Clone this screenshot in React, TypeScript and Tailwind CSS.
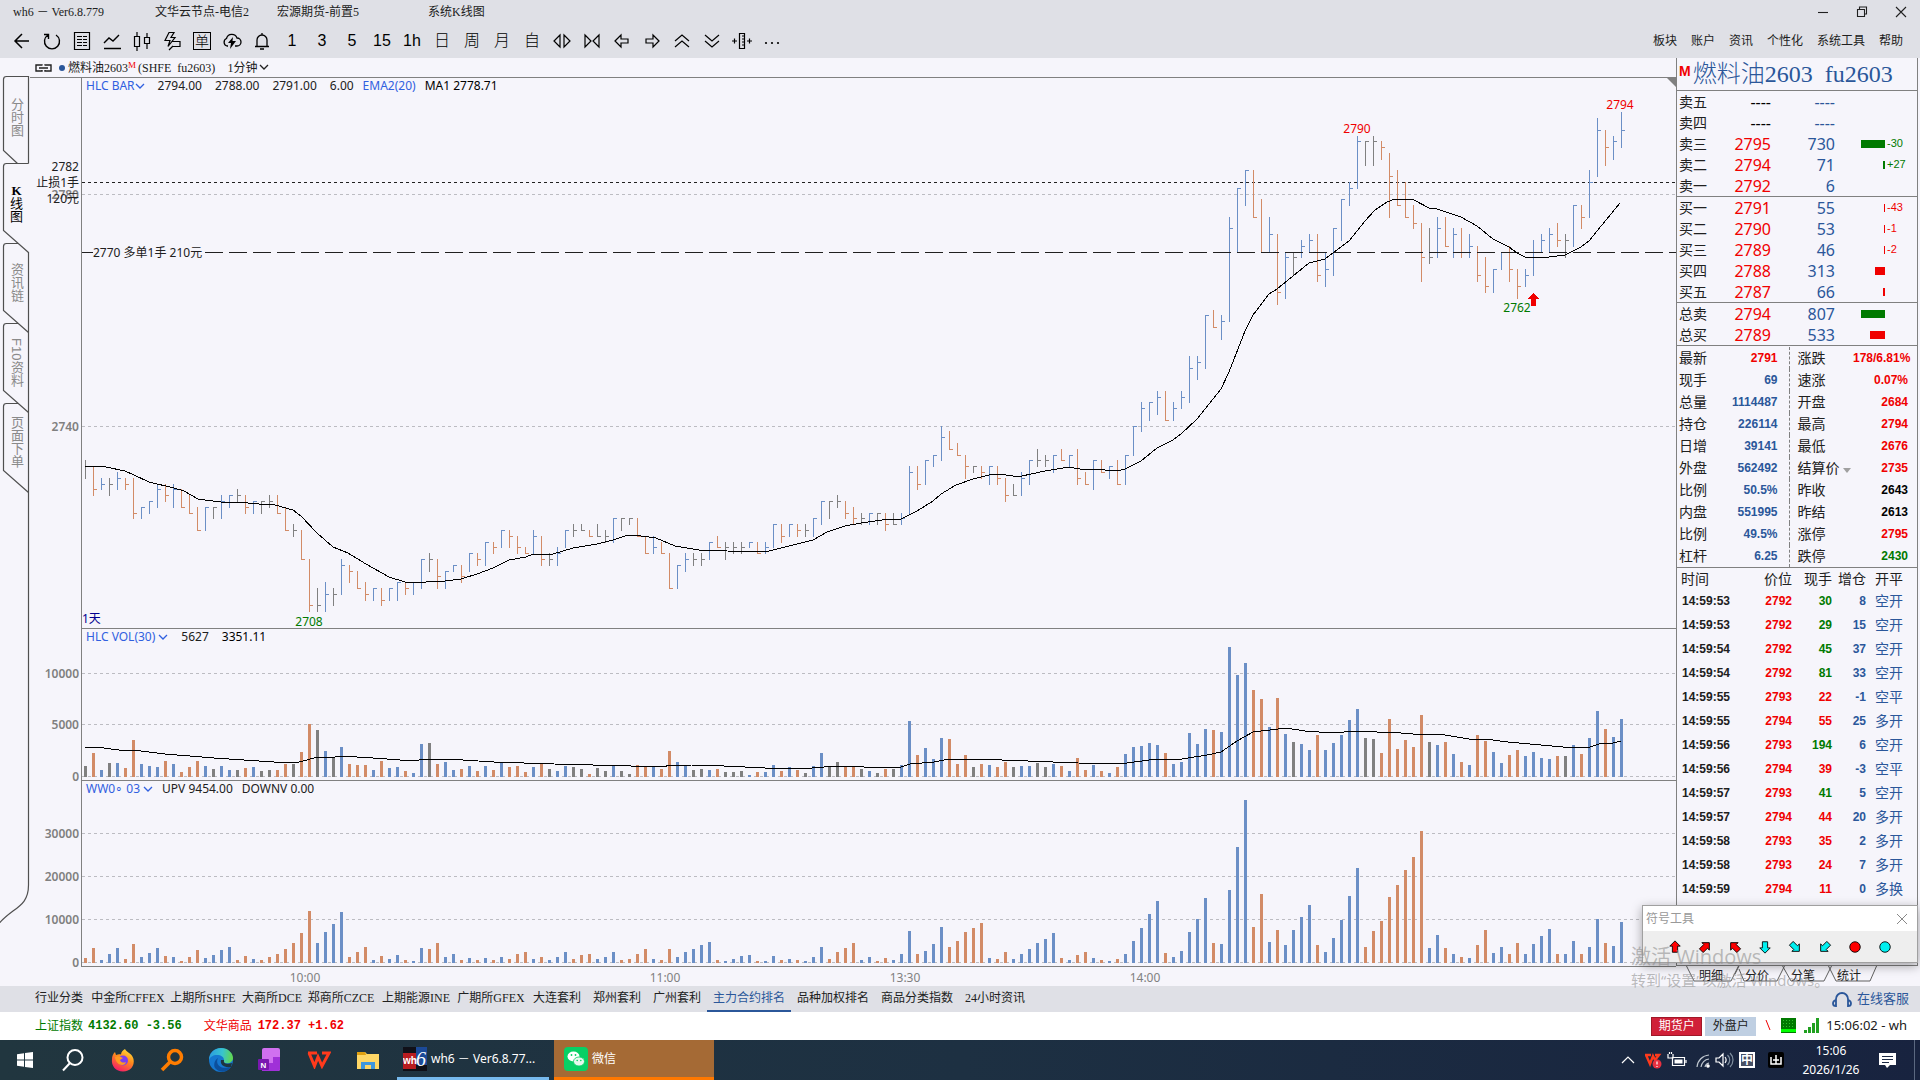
import React from "react";

type Kind = "u" | "d" | "g";
// high, low, close (offset from 2700), bar colour, volume in hundreds, flow direction
type Bar = [number, number, number, Kind, number, "u" | "d"];

const BARS: Bar[] = [
  [34,31,33,"g",11,"d"],[33,28,29,"d",23,"d"],[31,29,30,"u",7,"u"],[31,28,30,"g",14,"u"],[32,29,31,"u",14,"u"],
  [31,29,30,"d",9,"d"],[31,24,25,"d",36,"d"],[26,24,26,"u",13,"u"],[27,25,27,"u",11,"u"],[30,26,29,"u",10,"u"],
  [30,27,28,"d",16,"d"],[30,26,29,"u",13,"u"],[29,26,26,"d",5,"d"],[28,25,25,"d",10,"d"],[26,22,22,"d",16,"d"],
  [26,22,26,"u",11,"u"],[26,24,26,"g",8,"u"],[28,24,27,"u",11,"u"],[28,26,28,"u",7,"u"],[29,27,28,"g",7,"d"],
  [28,25,26,"d",9,"d"],[27,25,27,"u",10,"u"],[27,25,27,"g",6,"d"],[28,26,27,"g",7,"d"],[28,25,25,"d",7,"d"],
  [26,22,22,"d",13,"d"],[23,21,22,"g",13,"d"],[22,17,17,"d",24,"d"],[17,8,9,"d",51,"d"],[12,8,9,"g",46,"u"],
  [13,8,11,"u",25,"u"],[12,9,11,"g",19,"u"],[17,11,16,"u",29,"u"],[16,13,15,"d",13,"d"],[15,12,12,"d",12,"d"],
  [13,10,11,"d",12,"d"],[12,10,12,"u",7,"u"],[12,9,10,"d",16,"d"],[12,10,12,"u",9,"u"],[13,10,13,"u",10,"u"],
  [13,11,12,"d",6,"d"],[13,11,13,"u",4,"u"],[17,12,17,"u",32,"u"],[18,15,17,"g",33,"d"],[17,12,14,"d",13,"d"],
  [15,12,15,"u",15,"u"],[16,15,16,"u",7,"u"],[16,13,14,"d",8,"d"],[18,15,18,"u",11,"u"],[18,16,17,"d",6,"d"],
  [20,16,20,"u",11,"u"],[20,18,19,"d",7,"d"],[22,19,22,"u",14,"u"],[22,19,21,"d",10,"d"],[21,18,19,"d",11,"d"],
  [19,18,18,"d",5,"d"],[22,18,21,"u",10,"u"],[21,16,17,"d",14,"d"],[18,16,17,"g",8,"u"],[19,16,18,"u",6,"u"],
  [22,19,22,"u",11,"u"],[23,21,22,"g",10,"d"],[23,22,22,"g",8,"d"],[22,21,21,"d",3,"d"],[23,21,21,"g",9,"u"],
  [22,20,21,"g",6,"u"],[24,20,24,"u",11,"u"],[24,22,24,"g",6,"d"],[24,23,24,"g",3,"d"],[24,21,21,"d",12,"d"],
  [21,18,18,"d",11,"d"],[21,18,19,"u",10,"u"],[20,18,18,"d",8,"d"],[18,12,12,"d",25,"d"],[16,12,16,"u",15,"u"],
  [18,15,17,"u",11,"u"],[18,16,17,"g",7,"u"],[18,16,17,"g",8,"u"],[20,17,20,"u",7,"u"],[21,19,19,"d",8,"d"],
  [20,17,19,"g",5,"u"],[20,18,19,"g",5,"u"],[20,18,19,"g",6,"u"],[20,19,20,"u",2,"u"],[20,18,18,"d",5,"d"],
  [20,18,19,"u",5,"u"],[23,19,23,"u",12,"u"],[23,20,21,"d",6,"d"],[23,21,23,"u",10,"u"],[23,21,22,"d",7,"d"],
  [23,21,22,"g",4,"u"],[24,21,24,"u",11,"u"],[27,23,27,"u",23,"u"],[27,24,27,"g",10,"d"],[28,26,27,"g",15,"d"],
  [27,24,25,"d",10,"d"],[26,23,24,"d",11,"d"],[25,23,24,"g",8,"u"],[25,23,25,"u",6,"u"],[25,23,25,"g",4,"d"],
  [25,22,23,"d",8,"d"],[25,23,23,"g",8,"u"],[25,23,24,"u",12,"u"],[33,25,32,"u",54,"u"],[33,29,30,"d",21,"d"],
  [34,30,34,"u",28,"u"],[35,33,35,"u",17,"u"],[40,34,38,"u",38,"u"],[39,36,36,"d",37,"d"],[37,35,35,"d",13,"d"],
  [35,31,33,"d",21,"d"],[33,32,33,"g",10,"d"],[33,31,32,"d",13,"d"],[33,30,33,"u",12,"u"],[33,30,31,"d",10,"d"],
  [31,27,28,"d",15,"d"],[30,28,28,"g",10,"u"],[32,28,31,"u",11,"u"],[34,30,34,"u",11,"u"],[36,33,34,"g",14,"u"],
  [35,33,34,"g",10,"u"],[35,32,35,"u",13,"u"],[36,34,34,"d",11,"d"],[35,33,35,"u",6,"u"],[36,30,31,"d",18,"d"],
  [32,30,30,"d",7,"d"],[34,29,34,"u",12,"u"],[34,32,32,"d",6,"d"],[33,31,33,"u",4,"u"],[34,30,30,"d",10,"d"],
  [35,30,35,"u",22,"u"],[40,35,40,"u",29,"u"],[44,39,43,"u",30,"u"],[44,41,44,"u",33,"u"],[46,42,45,"u",31,"u"],
  [46,41,41,"d",23,"d"],[44,41,43,"u",13,"u"],[46,43,45,"u",15,"u"],[52,44,50,"u",43,"u"],[52,48,51,"u",32,"u"],
  [59,50,59,"u",47,"u"],[60,57,57,"d",46,"d"],[59,55,58,"u",44,"u"],[76,58,74,"u",126,"u"],[81,70,81,"u",99,"u"],
  [84,78,84,"u",111,"u"],[84,76,76,"d",84,"d"],[79,70,70,"d",76,"d"],[76,70,73,"u",49,"u"],[73,61,63,"d",77,"d"],
  [70,62,69,"u",42,"u"],[70,66,69,"g",34,"u"],[72,69,71,"u",32,"u"],[73,70,72,"u",26,"u"],[73,65,66,"d",41,"d"],
  [70,64,67,"u",26,"u"],[74,66,74,"u",33,"u"],[79,72,79,"u",41,"u"],[82,78,81,"u",55,"u"],[90,81,89,"u",66,"u"],
  [89,85,89,"g",38,"d"],[90,85,89,"g",37,"d"],[89,86,88,"d",23,"d"],[87,76,83,"d",56,"d"],[84,78,78,"d",27,"d"],
  [82,76,76,"d",36,"d"],[78,74,75,"d",29,"d"],[75,65,69,"d",60,"d"],[74,68,69,"g",34,"u"],[76,69,74,"u",31,"u"],
  [76,71,71,"d",34,"d"],[74,69,73,"u",22,"u"],[74,69,70,"d",15,"d"],[73,69,71,"u",12,"u"],[71,65,66,"d",41,"d"],
  [69,63,64,"d",35,"d"],[67,63,67,"u",24,"u"],[70,67,70,"u",14,"u"],[71,65,67,"d",21,"d"],[67,62,64,"d",26,"d"],
  [67,64,66,"u",20,"u"],[72,66,70,"u",24,"u"],[73,70,72,"u",18,"u"],[74,70,73,"u",17,"u"],[75,71,72,"d",20,"d"],
  [73,69,72,"g",20,"u"],[78,71,78,"u",31,"u"],[78,74,76,"d",22,"d"],[84,76,82,"u",38,"u"],[93,83,91,"u",64,"u"],
  [91,85,88,"d",47,"d"],[90,86,89,"u",39,"u"],[94,88,91,"u",56,"u"],
];

const MA_LINE =
  "85,466 106,467 125,471 134,475 149,482 174,488 184,491 198,499 205,500 221,502 237,502 259,504 275,505 293,510 301,516 317,533 333,547 348,553 366,564 389,577 405,582 413,583 426,582 445,581 461,579 477,574 493,568 509,560 526,557 533,554 553,554 573,548 597,544 613,540 628,535 641,536 656,538 675,546 699,550 727,551 765,552 773,550 797,544 813,540 827,532 845,526 861,523 882,520 901,519 917,511 933,501 941,494 956,485 973,479 989,475 999,474 1013,476 1022,476 1045,471 1069,467 1085,470 1093,469 1117,471 1125,469 1141,461 1157,448 1165,444 1173,440 1181,434 1197,419 1213,399 1221,389 1229,372 1245,331 1253,315 1269,294 1277,289 1293,276 1309,263 1325,259 1349,241 1365,221 1375,210 1387,202 1395,199 1414,200 1429,208 1437,209 1461,217 1477,226 1493,239 1509,247 1517,253 1525,257 1541,258 1565,255 1581,247 1589,241 1597,231 1620,203";
const VOL_LINE =
  "85,747 96,747 126,751 133,750 165,754 214,758 274,762 299,762 318,757 335,757 341,756 373,758 414,761 425,759 447,759 494,762 554,764 631,766 661,767 672,765 691,765 724,766 765,768 812,768 836,766 864,767 901,767 910,764 934,762 949,759 976,759 1028,761 1078,763 1119,764 1157,759 1182,759 1207,755 1221,752 1237,741 1253,732 1270,730 1286,728 1305,731 1333,733 1355,731 1373,731 1381,733 1389,732 1413,734 1445,735 1469,739 1485,739 1508,742 1563,747 1590,747 1599,744 1613,743 1621,741";

const COLOR = { u: "#6b8fc6", d: "#d28b67", g: "#808080" };
const GRID = "#bcbcc2";

const UI = "font-['Liberation_Serif','Noto_Sans_CJK_SC',sans-serif]";
const SANS = "font-['Noto_Sans','Noto_Sans_CJK_SC',sans-serif]";
const ARIAL = "font-['Liberation_Sans','Noto_Sans_CJK_SC',sans-serif]";

const barX = (i: number) => 3 + i * 8;
const priceY = (p: number) => Math.floor(332 - 5.8 * (p - 40));

const FLOW = BARS.reduce<number[]>((acc, b, i) => {
  acc.push(i > 0 && BARS[i - 1][5] === b[5] ? acc[i - 1] + b[4] : b[4]);
  return acc;
}, []);

function GridLine({ y, dash = "3 3", color = GRID }: { y: number; dash?: string; color?: string }) {
  return <line x1="0" x2="100%" y1={y + 0.5} y2={y + 0.5} stroke={color} strokeDasharray={dash} />;
}

function AxisLabel({ y, children }: { y: number; children: React.ReactNode }) {
  return (
    <text x="-3" y={y} textAnchor="end" fill="#808080" fontSize="12" fontWeight="600">
      {children}
    </text>
  );
}

function PriceChart() {
  return (
    <svg className={`block h-[534px] w-full overflow-visible ${SANS}`} fontSize="12" shapeRendering="crispEdges">
      <GridLine y={100} />
      <GridLine y={332} />
      <GridLine y={88} color="#202020" />
      <AxisLabel y={105}>2780</AxisLabel>
      <AxisLabel y={337}>2740</AxisLabel>
      <g textAnchor="end" fill="#202020">
        <text x="-3" y="77">2782</text>
        <text x="-3" y="93">止损1手</text>
        <text x="-3" y="109">120元</text>
      </g>
      {BARS.map(([h, l, c, k], i) => (
        <g key={i} fill={COLOR[k]}>
          <rect x={barX(i)} y={priceY(h)} width="1" height={priceY(l) - priceY(h) + 1} />
          <rect x={barX(i)} y={priceY(c)} width="4" height="1" />
        </g>
      ))}
      <line x1="0" x2="11" y1="158.500" y2="158.500" stroke="#202020" />
      <text x="11" y="163" fill="#202020">2770 多单1手 210元</text>
      <line x1="123" x2="100%" y1="158.500" y2="158.500" stroke="#202020" strokeDasharray="18 6" />
      <g transform="translate(-82 -94)">
        <polyline points={MA_LINE} fill="none" stroke="#000" />
      </g>
      <text x="1275" y="39" textAnchor="middle" fill="#f00000">2790</text>
      <text x="1538" y="15" textAnchor="middle" fill="#f00000">2794</text>
      <text x="1435" y="218" textAnchor="middle" fill="#007a00">2762</text>
      <text x="227" y="532" textAnchor="middle" fill="#007a00">2708</text>
      <text x="0" y="529" fill="#000090">1天</text>
      <path d="M1451 199l6 6h-3v7h-5v-7h-4z" fill="#f00000" />
    </svg>
  );
}

function VolumeChart() {
  return (
    <svg className={`block h-[135px] w-full overflow-visible ${SANS}`} shapeRendering="crispEdges">
      <GridLine y={28} />
      <GridLine y={79} />
      <GridLine y={131} />
      <AxisLabel y={33}>10000</AxisLabel>
      <AxisLabel y={84}>5000</AxisLabel>
      <AxisLabel y={136}>0</AxisLabel>
      {BARS.map(([, , , k, v], i) => {
        const h = Math.round(v * 1.03);
        return <rect key={i} x={barX(i) - 1} y={132 - h} width="3" height={h} fill={COLOR[k]} />;
      })}
      <g transform="translate(-82 -645)">
        <polyline points={VOL_LINE} fill="none" stroke="#000" />
      </g>
    </svg>
  );
}

function FlowChart() {
  return (
    <svg className={`block h-[169px] w-full overflow-visible ${SANS}`} shapeRendering="crispEdges">
      {[36, 79, 122, 165].map((y, i) => (
        <React.Fragment key={y}>
          <GridLine y={y} />
          <AxisLabel y={y + 5}>{i === 3 ? "0" : `${30 - i * 10}000`}</AxisLabel>
        </React.Fragment>
      ))}
      {BARS.map((b, i) => {
        const h = Math.round(FLOW[i] * 0.43);
        return <rect key={i} x={barX(i) - 1} y={166 - h} width="3" height={h} fill={COLOR[b[5]]} />;
      })}
    </svg>
  );
}

function Chevron({ className = "" }: { className?: string }) {
  return (
    <svg width="10" height="7" viewBox="0 0 10 7" className={className} fill="none" stroke="currentColor" strokeWidth="1.300">
      <path d="M1 1l4 4 4-4" />
    </svg>
  );
}

function Glyph({ children, w = 1.2 }: { children: React.ReactNode; w?: number }) {
  return (
    <svg width="20" height="20" viewBox="0 0 20 20" fill="none" stroke="currentColor" strokeWidth={w}>
      {children}
    </svg>
  );
}

const TOOLS: [string, React.ReactNode][] = [
  ["返回", <Glyph w={1.5}><path d="M17 10H3M10 3l-7 7 7 7" /></Glyph>],
  ["刷新", <Glyph w={1.4}><path d="M6 4a7.5 7.5 0 1 0 8 0M2 3.500h4.500v4.500" /></Glyph>],
  ["报价", <Glyph w={1.2}><path d="M2.500 1.500h15v17h-15zM5 5.500h5M11 5.500h4M5 8.500h5M11 8.500h4M5 11.500h5M11 11.500h4M5 14.500h5M11 14.500h4" /></Glyph>],
  ["分时", <Glyph w={1.4}><path d="M2 12l5-5 4 3 6-6M2 17.500h17" /></Glyph>],
  ["K线", <Glyph w={1.2}><path d="M2.500 5.500h5v10h-5zM5 1v4M5 15v5M12.500 6.500h5v6h-5zM15 2v4M15 12v6" /></Glyph>],
  ["闪电手", <Glyph w={1.2}><path d="M7 1.500h5l-3 5h4l-7 9 2-6H3zM10 10.500h8v5h-7M11 15l-4 4" /></Glyph>],
  ["下单", <span className="flex size-[18px] items-center justify-center border border-black text-[14px] leading-none">单</span>],
  ["云", <Glyph w={1.3}><path d="M6 15H5a4 4 0 0 1-.5-7.500A5.500 5.500 0 0 1 15 7a4 4 0 0 1 0 8h-2" /><path d="M11 6l-5 6h3l-1 6 6-8h-3.500z" fill="currentColor" stroke="none" /></Glyph>],
  ["提醒", <Glyph w={1.3}><path d="M3 15.500h14M5 15V9a5 5 0 0 1 10 0v6M10 2v2M8 18h4" /></Glyph>],
  ["1分钟", "1"], ["3分钟", "3"], ["5分钟", "5"], ["15分钟", "15"], ["1小时", "1h"],
  ["日线", "日"], ["周线", "周"], ["月线", "月"], ["自定义周期", "自"],
  ["放宽", <Glyph><path d="M8 4L2 10l6 6zM12 4l6 6-6 6z" /></Glyph>],
  ["收窄", <Glyph><path d="M3 4l6 6-6 6zM17 4l-6 6 6 6z" /></Glyph>],
  ["左移", <Glyph><path d="M3 10l6-6v4h7v4H9v4z" /></Glyph>],
  ["右移", <Glyph><path d="M17 10l-6-6v4H4v4h7v4z" /></Glyph>],
  ["向上", <Glyph><path d="M3 10l7-6 7 6M3 16l7-6 7 6" /></Glyph>],
  ["向下", <Glyph><path d="M3 4l7 6 7-6M3 10l7 6 7-6" /></Glyph>],
  ["间距", <Glyph><path d="M7.500 2.500h5v15h-5zM10 5h2M10 8h2M10 11h2M10 14h2M0 10h5M2.500 7.500v5M15 10h5M17.500 7.500v5" /></Glyph>],
  ["更多", <Glyph><g fill="currentColor" stroke="none"><circle cx="4" cy="12" r="1.100" /><circle cx="10" cy="12" r="1.100" /><circle cx="16" cy="12" r="1.100" /></g></Glyph>],
];

function Header() {
  return (
    <header className={`bg-[#dfe0e6] text-[#202020] ${UI}`}>
      <div className="flex h-[24px] items-center pl-[13px] text-[12px]">
        <span className="w-[142px] whitespace-pre">wh6 － Ver6.8.779</span>
        <span className="w-[122px]">文华云节点-电信2</span>
        <span className="w-[151px]">宏源期货-前置5</span>
        <span>系统K线图</span>
        <div className="ml-auto flex">
          {[
            ["最小化", "M5 10.500h10"],
            ["还原", "M5.500 7.500h7v7h-7zM7.500 7v-2h7v7h-2"],
            ["关闭", "M5 5l10 10M15 5L5 15"],
          ].map(([label, d]) => (
            <button key={label} aria-label={label} className="flex w-[39px] justify-center">
              <Glyph w={1.1}><path d={d} /></Glyph>
            </button>
          ))}
        </div>
      </div>
      <div className="flex h-[34px] items-center pl-[7px]">
        {TOOLS.map(([label, icon]) => (
          <button key={label} aria-label={label} className={`flex h-[34px] w-[30px] items-center justify-center text-[16px] leading-none font-light text-black ${ARIAL}`}>
            {icon}
          </button>
        ))}
        <nav className="ml-auto flex gap-[14px] pr-[17px] text-[12px]">
          {["板块", "账户", "资讯", "个性化", "系统工具", "帮助"].map((t) => (
            <button key={t}>{t}</button>
          ))}
        </nav>
      </div>
    </header>
  );
}

function SideTabs() {
  const tab = "flex w-full items-center justify-center [writing-mode:vertical-rl] text-[13px] leading-none text-[#8a8a8a]";
  return (
    <aside className={`relative w-[30px] shrink-0 pt-px ${ARIAL}`}>
      <svg className="absolute inset-0 h-full w-full overflow-visible" fill="none" stroke="#505050" strokeWidth="1.200">
        <path d="M28.500 86.500v-87h-22q-3 0-3 3v71l14 13" />
        <path d="M28.500 86.500h-22q-3 0-3 3v64l25 22" />
        {[166, 246, 326].map((y) => (
          <path key={y} d={`M18 ${y + 0.5}H6.500q-3 0-3 3v64l25 22`} />
        ))}
        <path d="M28.500 175v633c0 22-15 22-29 38" />
      </svg>
      <nav className="relative flex flex-col pl-[3px]">
        <button className={`${tab} h-[78px]`}>分时图</button>
        <button className="mt-[8px] flex h-[78px] w-full flex-col items-center justify-center text-[13px] leading-[13px] text-black">
          <b className="font-['Liberation_Serif',serif]">K</b>
          <span>线</span>
          <span>图</span>
        </button>
        <button className={`${tab} h-[80px]`}>资讯链</button>
        <button className={`${tab} h-[80px]`}>F10资料</button>
        <button className={`${tab} h-[80px]`}>页面下单</button>
      </nav>
    </aside>
  );
}

function Pane({ header, children }: { header: React.ReactNode; children: React.ReactNode }) {
  return (
    <section className="ml-[51px] border-b border-l border-[#808080]">
      <div className={`flex h-[16px] items-center pl-[4px] text-[12px] whitespace-pre text-[#202020] ${SANS}`}>{header}</div>
      {children}
    </section>
  );
}

function Charts() {
  return (
    <div className="relative min-w-0 flex-1 border-t border-[#808080]">
      <svg className="absolute top-0 right-0 z-10" width="9" height="9"><path d="M0 0h9v9z" fill="#808080" /></svg>
      <Pane
        header={
          <>
            <button className="flex items-center text-[#3060e0]">HLC BAR<Chevron /></button>
            <span className="ml-[13px]">2794.00</span>
            <span className="ml-[13px]">2788.00</span>
            <span className="ml-[13px]">2791.00</span>
            <span className="ml-[13px]">6.00</span>
            <span className="ml-[9px] text-[#3060e0]">EMA2(20)</span>
            <span className="ml-[9px] text-black">MA1 2778.71</span>
          </>
        }
      >
        <PriceChart />
      </Pane>
      <Pane
        header={
          <>
            <button className="flex items-center text-[#3060e0]">HLC VOL(30)<Chevron className="ml-[3px]" /></button>
            <span className="ml-[13px]">5627</span>
            <span className="ml-[13px] text-black">3351.11</span>
          </>
        }
      >
        <VolumeChart />
      </Pane>
      <Pane
        header={
          <>
            <button className="flex items-center text-[#3060e0]">WW0∘ 03<Chevron className="ml-[3px]" /></button>
            <span className="ml-[9px]">UPV 9454.00</span>
            <span className="ml-[9px]">DOWNV 0.00</span>
          </>
        }
      >
        <FlowChart />
      </Pane>
      <svg className={`ml-[52px] block h-[19px] ${SANS}`} fill="#808080" fontSize="12" textAnchor="middle" width="1200">
        <text x="223" y="15">10:00</text>
        <text x="583" y="15">11:00</text>
        <text x="823" y="15">13:30</text>
        <text x="1063" y="15">14:00</text>
      </svg>
    </div>
  );
}

const RED = "text-[#f00000]";
const BLUE = "text-[#2b579a]";
const GREEN = "text-[#007a00]";

type Quote = [string, string, string, number?, string?];
const ASKS: Quote[] = [
  ["卖五", "----", "----"], ["卖四", "----", "----"], ["卖三", "2795", "730", 24, "-30"], ["卖二", "2794", "71", 2, "+27"], ["卖一", "2792", "6"],
];
const BIDS: Quote[] = [
  ["买一", "2791", "55", 1, "-43"], ["买二", "2790", "53", 1, "-1"], ["买三", "2789", "46", 1, "-2"], ["买四", "2788", "313", 10], ["买五", "2787", "66", 2],
];
const TOTALS: Quote[] = [["总卖", "2794", "807", 24], ["总买", "2789", "533", 15]];

function QuoteTable({ rows, green }: { rows: Quote[]; green: (i: number) => boolean }) {
  return (
    <div className="shrink-0 border-b border-[#808080]">
      <table className={`w-full table-fixed ${SANS}`}>
        <colgroup><col className="w-[43px]" /><col className="w-[51px]" /><col className="w-[64px]" /><col className="w-[50px]" /><col /></colgroup>
        <tbody>
          {rows.map(([label, price, qty, bar, delta], i) => (
            <tr key={label} className="h-[21px] leading-none">
              <th className="pl-[2px] text-left text-[14px] font-normal text-[#202020]">{label}</th>
              <td className={`text-right text-[16px] ${price === "----" ? "text-black" : RED}`}>{price}</td>
              <td className={`text-right text-[16px] ${BLUE}`}>{qty}</td>
              <td><div className={`ml-auto h-[8px] ${green(i) ? "bg-[#007a00]" : "bg-[#f00000]"}`} style={{ width: bar ?? 0 }} /></td>
              <td className={`pl-[2px] text-[11px] ${ARIAL} ${green(i) ? GREEN : RED}`}>{delta}</td>
            </tr>
          ))}
        </tbody>
      </table>
    </div>
  );
}

const DETAILS: [string, string, string, string, string, string][] = [
  ["最新", "2791", RED, "涨跌", "178/6.81%", RED],
  ["现手", "69", BLUE, "速涨", "0.07%", RED],
  ["总量", "1114487", BLUE, "开盘", "2684", RED],
  ["持仓", "226114", BLUE, "最高", "2794", RED],
  ["日增", "39141", BLUE, "最低", "2676", RED],
  ["外盘", "562492", BLUE, "结算价", "2735", RED],
  ["比例", "50.5%", BLUE, "昨收", "2643", "text-black"],
  ["内盘", "551995", BLUE, "昨结", "2613", "text-black"],
  ["比例", "49.5%", BLUE, "涨停", "2795", RED],
  ["杠杆", "6.25", BLUE, "跌停", "2430", GREEN],
];

const TRADES: [string, string, string, boolean, string, string][] = [
  ["14:59:53", "2792", "30", true, "8", "空开"],
  ["14:59:53", "2792", "29", true, "15", "空开"],
  ["14:59:54", "2792", "45", true, "37", "空开"],
  ["14:59:54", "2792", "81", true, "33", "空开"],
  ["14:59:55", "2793", "22", false, "-1", "空平"],
  ["14:59:55", "2794", "55", false, "25", "多开"],
  ["14:59:56", "2793", "194", true, "6", "空开"],
  ["14:59:56", "2794", "39", false, "-3", "空平"],
  ["14:59:57", "2793", "41", true, "5", "空开"],
  ["14:59:57", "2794", "44", false, "20", "多开"],
  ["14:59:58", "2793", "35", false, "2", "多开"],
  ["14:59:58", "2793", "24", false, "7", "多开"],
  ["14:59:59", "2794", "11", false, "0", "多换"],
];

const UP = "M8 1l6 6h-3v7H5V7H2z";
const SYMBOLS: [string, string, number][] = [
  ["上箭头", "#ff0000", 0], ["右上箭头", "#ff0000", 45], ["左上箭头", "#ff0000", -45],
  ["下箭头", "#00f0f0", 180], ["右下箭头", "#00f0f0", 135], ["左下箭头", "#00f0f0", 225],
];

function SymbolTool() {
  return (
    <div className="absolute right-[2px] bottom-[23px] z-20 w-[276px] border border-[#a0a0a0] bg-[#eeeeee] shadow-[0_3px_10px_rgba(0,0,0,0.35)]">
      <div className={`flex h-[25px] items-center justify-between bg-white pr-[9px] pl-[3px] text-[12px] text-[#999] ${UI}`}>
        <span>符号工具</span>
        <button aria-label="关闭"><svg width="12" height="12" stroke="#888" fill="none"><path d="M1 1l10 10M11 1L1 11" /></svg></button>
      </div>
      <div className="flex h-[31px] items-center gap-[14px] pl-[24px]">
        {SYMBOLS.map(([label, fill, turn]) => (
          <button key={label} aria-label={label}>
            <svg width="16" height="14" viewBox="0 0 16 16" stroke="#000"><path d={UP} fill={fill} transform={`rotate(${turn} 8 8)`} /></svg>
          </button>
        ))}
        <button aria-label="红点"><svg width="16" height="14" viewBox="0 0 16 16" stroke="#000"><circle cx="8" cy="8" r="6" fill="#ff0000" /></svg></button>
        <button aria-label="青点"><svg width="16" height="14" viewBox="0 0 16 16" stroke="#000"><circle cx="8" cy="8" r="6" fill="#00f0f0" /></svg></button>
      </div>
    </div>
  );
}

function RightPanel() {
  return (
    <div className="relative flex w-[244px] shrink-0 flex-col pr-[2px]">
      <div className="flex flex-1 flex-col border-r border-b border-l border-[#808080]">
        <div className="flex h-[33px] shrink-0 items-center border-b border-[#808080] pl-[2px]">
          <span className="mb-[6px] font-['Liberation_Sans',sans-serif] text-[14px] font-bold text-[#f00000]">M</span>
          <h1 className={`ml-[2px] text-[24px] leading-none whitespace-pre ${BLUE} font-['Liberation_Serif','Noto_Sans_CJK_SC',serif] font-light`}>燃料油2603  fu2603</h1>
        </div>
        <QuoteTable rows={ASKS} green={() => true} />
        <QuoteTable rows={BIDS} green={() => false} />
        <QuoteTable rows={TOTALS} green={(i) => i === 0} />
        <div className="shrink-0 border-b border-[#808080] pt-px">
          <table className={`w-full table-fixed ${ARIAL}`}>
            <colgroup><col className="w-[40px]" /><col className="w-[72px]" /><col className="w-[64px]" /><col /></colgroup>
            <tbody>
              {DETAILS.map(([a, av, ac, b, bv, bc], i) => (
                <tr key={i} className="h-[22px] leading-none">
                  <th className="pl-[2px] text-left text-[14px] font-normal text-[#202020]">{a}</th>
                  <td className={`border-r border-dashed border-[#808080] pr-[11px] text-right text-[12px] font-bold ${ac}`}>{av}</td>
                  <th className="pl-[8px] text-left text-[14px] font-normal whitespace-nowrap text-[#202020]">
                    {b}
                    {b === "结算价" && <span className="ml-[3px] inline-block border-x-[4px] border-t-[5px] border-x-transparent border-t-[#a0a0a0]" />}
                  </th>
                  <td className={`pr-[9px] text-right text-[12px] font-bold ${bc}`}>{bv}</td>
                </tr>
              ))}
            </tbody>
          </table>
        </div>
        <table className={`w-full table-fixed ${ARIAL}`}>
          <colgroup><col className="w-[64px]" /><col className="w-[51px]" /><col className="w-[40px]" /><col className="w-[34px]" /><col /></colgroup>
          <thead>
            <tr className="h-[21px] text-right text-[14px] leading-none text-[#202020]">
              <th className="pl-[4px] text-left font-normal">时间</th>
              <th className="font-normal">价位</th>
              <th className="font-normal">现手</th>
              <th className="font-normal">增仓</th>
              <th className="pl-[9px] text-left font-normal">开平</th>
            </tr>
          </thead>
          <tbody>
            {TRADES.map(([time, price, lots, down, chg, side], i) => (
              <tr key={i} className="h-[24px] text-right text-[12px] leading-none font-bold">
                <td className="pl-[5px] text-left text-[#202020]">{time}</td>
                <td className={RED}>{price}</td>
                <td className={down ? GREEN : RED}>{lots}</td>
                <td className={BLUE}>{chg}</td>
                <td className={`pl-[9px] text-left text-[14px] font-normal ${BLUE}`}>{side}</td>
              </tr>
            ))}
          </tbody>
        </table>
      </div>
      <div className="relative flex h-[20px] shrink-0 pl-[12px]">
        <svg className="absolute top-0 left-[10px]" width="200" height="17" fill="none" stroke="#606060">
          <path d="M0 -1l8 16h37l8-16M53 0l-4 8M53 3l5 12h33l8-16M96 -1l9 16h33l8-16M142 -1l8 16h34l7-16" />
        </svg>
        {["明细", "分价", "分笔", "统计"].map((t) => (
          <button key={t} className={`relative w-[46px] text-[12px] leading-[16px] text-[#202020] ${UI}`}>{t}</button>
        ))}
      </div>
      <SymbolTool />
      <div className="pointer-events-none absolute right-[3px] bottom-[-4px] z-30 w-[286px] font-['Open_Sans','Noto_Sans_CJK_SC',sans-serif] whitespace-nowrap text-[#909090]/60">
        <p className="text-[20px] leading-[26px]">激活 Windows</p>
        <p className="text-[15px] leading-[20px]">转到“设置”以激活 Windows。</p>
      </div>
    </div>
  );
}

const SHEETS: [string, string][] = [
  ["行业分类", "w-[60px]"], ["中金所CFFEX", "w-[78px]"], ["上期所SHFE", "w-[72px]"], ["大商所DCE", "w-[66px]"],
  ["郑商所CZCE", "w-[72px]"], ["上期能源INE", "w-[78px]"], ["广期所GFEX", "w-[72px]"], ["大连套利", "w-[60px]"],
  ["郑州套利", "w-[60px]"], ["广州套利", "w-[60px]"], ["主力合约排名", "w-[84px]"], ["品种加权排名", "w-[84px]"],
  ["商品分类指数", "w-[84px]"], ["24小时资讯", "w-[72px]"],
];

function BottomBars() {
  return (
    <>
      <nav className={`flex h-[26px] items-center bg-[#dfe0e6] pl-[29px] text-[12px] text-[#202020] ${UI}`}>
        {SHEETS.map(([t, w]) => (
          <a
            key={t}
            href="#"
            className={`flex h-[26px] shrink-0 items-center justify-center border-b-2 whitespace-nowrap ${w} ${t === "主力合约排名" ? "border-[#2b579a] text-[#2b579a]" : "border-transparent"}`}
          >
            {t}
          </a>
        ))}
        <a href="#" className={`mr-[11px] ml-auto flex items-center gap-[5px] text-[13px] ${BLUE}`}>
          <svg width="20" height="17" viewBox="0 0 20 17" fill="none" stroke="currentColor" strokeWidth="1.800">
            <path d="M4 11V8a6 6 0 0 1 12 0v3M4 9c-4 1-4 6 0 6zM16 9c4 1 4 6 0 6z" />
          </svg>
          在线客服
        </a>
      </nav>
      <div className={`flex h-[28px] items-center bg-white pl-[35px] text-[12px] ${UI}`}>
        <span className={GREEN}>上证指数</span>
        <b className={`ml-[5px] font-['Liberation_Mono',monospace] ${GREEN}`}>4132.60 -3.56</b>
        <span className={`ml-[22px] ${RED}`}>文华商品</span>
        <b className={`ml-[6px] font-['Liberation_Mono',monospace] ${RED}`}>172.37 +1.62</b>
        <div className="mr-[13px] ml-auto flex items-center">
          <button className="h-[19px] w-[51px] border border-[#a01828] bg-[#d02038] leading-none text-white">期货户</button>
          <button className="ml-[3px] h-[19px] w-[51px] bg-[#bfcfe2] leading-none text-[#202020]">外盘户</button>
          <svg className="ml-[9px]" width="54" height="18" viewBox="0 0 54 18">
            <path d="M1 3l4 10" stroke="#f00000" />
            <path d="M16 1h15v15H16z" fill="#007a00" />
            <path d="M18 3.500h12M18 6.500h12M18 9.500h12" stroke="#30c030" strokeDasharray="1 2" />
            <path d="M16 12h15v3H16z" fill="#00ff00" />
            <path d="M39 13h3v3h-3zM43 10h3v6h-3zM47 6h3v10h-3zM51 1h3v15h-3z" fill="#20a020" />
          </svg>
          <span className={`ml-[7px] text-[13px] text-[#202020] ${SANS}`}>15:06:02 - wh</span>
        </div>
      </div>
    </>
  );
}

const APPS: [string, React.ReactNode][] = [
  ["开始", <svg width="16" height="16" viewBox="0 0 16 16" fill="#fff"><path d="M0 2.200l7-1v6.300H0zM8 1l8-1v7.500H8zM0 8.500h7v6.300l-7-1zM8 8.500h8V16l-8-1.100z" /></svg>],
  ["搜索", <svg width="24" height="24" viewBox="0 0 24 24" fill="none" stroke="#fff" strokeWidth="2"><circle cx="13" cy="9.500" r="7.500" /><path d="M8 15l-7 7.500" /></svg>],
  ["Firefox", (
    <svg width="24" height="24" viewBox="0 0 24 24">
      <defs><linearGradient id="ff" x1="0.8" y1="0" x2="0.3" y2="1"><stop offset="0" stopColor="#ffe23a" /><stop offset="0.45" stopColor="#ff8a1c" /><stop offset="1" stopColor="#f5186a" /></linearGradient></defs>
      <path d="M14 1c1 3 7 4 8.500 10C24 18 19 23.500 12 23.500S0 18 1 11c0-3 1-5 3-7l1 3c2-1 4-1 5-.5C10 4 12 2 14 1z" fill="url(#ff)" />
      <circle cx="12" cy="12.500" r="5" fill="#7a3ff0" /><path d="M4 9c4-2 6 0 8 1l-3 2c1 3 4 3 6 2-1 5-10 4-11-5z" fill="#ff9a20" />
    </svg>
  )],
  ["Everything", <svg width="24" height="24" viewBox="0 0 24 24" fill="none" stroke="#ff7d00" strokeWidth="3.500"><circle cx="15" cy="9" r="6.500" /><path d="M10 14l-8 8" /></svg>],
  ["Edge", (
    <svg width="24" height="24" viewBox="0 0 24 24">
      <defs><linearGradient id="ed" x1="0" y1="0.3" x2="1" y2="0.4"><stop offset="0" stopColor="#2a9be0" /><stop offset="0.55" stopColor="#38c4d0" /><stop offset="1" stopColor="#62d84c" /></linearGradient></defs>
      <circle cx="12" cy="12" r="12" fill="#1577cf" />
      <path d="M0 12C0 5 5 0 12 0s12 5 12 10c0 4-4 6-8 5-2-.5-1-2-1-3 0-3-3-5-7-5-4 0-7 2-8 5z" fill="url(#ed)" />
      <path d="M9 10c-3 6 2 12 13 9-4 6-12 6-16 1-2-4 0-8 3-10z" fill="#0c4f9c" />
      <path d="M15 12c-1 3 2 5 8 3l-1 4c-8 1-11-3-10-7z" fill="#1e3540" />
    </svg>
  )],
  ["OneNote", (
    <svg width="24" height="24" viewBox="0 0 24 24">
      <rect x="4" y="0" width="18" height="23" rx="2" fill="#d070f0" /><path d="M15 9h7v12a2 2 0 0 1-2 2H4v-8h11z" fill="#a030d8" />
      <rect x="0" y="11" width="11" height="11" rx="1" fill="#7a18b0" /><text x="5.500" y="19.500" textAnchor="middle" fontSize="8" fontWeight="700" fontFamily="Liberation Sans" fill="#fff">N</text>
    </svg>
  )],
  ["WPS", <svg width="24" height="18" viewBox="0 0 24 18" fill="none" stroke="#ff3a1c" strokeWidth="3"><path d="M1 2h9M2 2l5.500 13L11 6l4 9 7-13h-7" /></svg>],
  ["文件资源管理器", (
    <svg width="22" height="19" viewBox="0 0 22 19">
      <path d="M0 1h8l2 2h12v15H0z" fill="#ffd766" /><path d="M0 1h8l1 3H0z" fill="#e0a010" /><path d="M4 18v-7h14v7h-4v-4H8v4z" fill="#3f97de" />
    </svg>
  )],
];

function Taskbar() {
  return (
    <footer className={`flex h-[40px] items-center bg-linear-to-r from-[#21363f] via-[#1d3042] to-[#18233f] text-[13px] text-white ${SANS}`}>
      {APPS.map(([label, icon]) => (
        <button key={label} aria-label={label} className="flex h-[40px] w-[49px] shrink-0 items-center justify-center">{icon}</button>
      ))}
      <button className="ml-[5px] flex h-[40px] w-[152px] items-center gap-[4px] border-b-[3px] border-[#76b9ed] pl-[6px] text-[12px] whitespace-nowrap">
        <svg width="24" height="24" viewBox="0 0 24 24" className="shrink-0">
          <path d="M0 0h24v24H0z" fill="#101018" /><path d="M0 6h13v16H0z" fill="#b81c20" /><path d="M13 0h11v18H13z" fill="#1c4a98" />
          <text x="0" y="17" fontSize="10" fontWeight="700" fontFamily="Liberation Sans" fill="#fff">wh</text>
          <text x="13" y="19" fontSize="20" fontStyle="italic" fontFamily="Liberation Serif" fill="#fff">6</text>
        </svg>
        wh6 － Ver6.8.77...
      </button>
      <button className="ml-[5px] flex h-[40px] w-[160px] items-center gap-[4px] border-b-[3px] border-[#ff7800] bg-[#a56a35] pl-[10px] text-[12px]">
        <svg width="24" height="24" viewBox="0 0 24 24">
          <rect width="24" height="24" rx="4" fill="#08d065" />
          <ellipse cx="9.500" cy="9.500" rx="6" ry="5" fill="#fff" /><ellipse cx="15" cy="14.500" rx="5.500" ry="4.500" fill="#e8f8ee" stroke="#08d065" strokeWidth="0.800" />
          <g fill="#08d065"><circle cx="7.500" cy="8" r="0.900" /><circle cx="11.500" cy="8" r="0.900" /><circle cx="13.200" cy="13.500" r="0.800" /><circle cx="16.800" cy="13.500" r="0.800" /></g>
        </svg>
        微信
      </button>
      <div className="ml-auto flex h-full items-center">
        <svg width="119" height="20" viewBox="0 0 119 20" fill="none" stroke="#fff" strokeWidth="1.200">
          <path d="M2 13l6-6 6 6" />
          <path d="M25 5h6M26 5l4 9 3-8 2 4 4-5h-4" stroke="#ff3a1c" strokeWidth="2.400" /><circle cx="37" cy="14" r="4.500" fill="#e83040" stroke="none" /><path d="M37 11.500v3M37 16v1" />
          <path d="M52.500 7.500h12v8h-12zM66 10v3M48 4v4h5V4M49.500 2v2M51.500 2v2" /><path d="M54.500 9.500h8v4h-8z" fill="#fff" stroke="none" />
          <path d="M77 17a13 13 0 0 1 12-12M81 17a9 9 0 0 1 8-8M85 17a5 5 0 0 1 4-4" stroke="#c0c8d0" /><circle cx="88" cy="16" r="1.200" fill="#fff" />
          <path d="M96 8h3l4-4v12l-4-4h-3zM105 7c1.500 2 1.500 4 0 6" /><path d="M107.500 5c3 3 3 7 0 10M110 3c4 4 4 10 0 14" stroke="#8090a0" />
        </svg>
        <span className="flex size-[16px] items-center justify-center border-2 border-white bg-white/20 text-[12px] leading-none font-bold">中</span>
        <svg className="ml-[13px]" width="16" height="16"><rect width="16" height="16" rx="2" fill="#000" /><path d="M3 5v7h10V5M8 3v9M5 8h6" fill="none" stroke="#fff" strokeWidth="1.500" /></svg>
        <div className="ml-[17px] w-[60px] text-center text-[12px] leading-[19px]">
          <div>15:06</div>
          <div>2026/1/26</div>
        </div>
        <button aria-label="通知" className="ml-[10px] flex w-[32px] justify-center">
          <svg width="17" height="17" viewBox="0 0 17 17"><path d="M0 1h17v12h-6l-3 3-2-3H0z" fill="#fff" /><path d="M3 4.500h11M3 7.500h11M3 10.500h7" stroke="#1b2944" /></svg>
        </button>
        <div className="mr-[5px] ml-[11px] h-full w-px bg-[#5b6880]" />
      </div>
    </footer>
  );
}

export default function App() {
  return (
    <div className="flex min-h-screen flex-col bg-[#f6f5fb]">
      <Header />
      <main className="flex flex-1">
        <div className="flex min-w-0 flex-1 flex-col">
          <div className={`flex h-[19px] items-center pl-[35px] text-[12px] text-[#202020] ${UI}`}>
            <svg width="17" height="8" viewBox="0 0 17 8" fill="none" stroke="#202020" strokeWidth="1.400">
              <path d="M7 1.500V1H1v6h6V6M10 1.500V1h6v6h-6V6M4 4h9" />
            </svg>
            <span className="ml-[7px] size-[6px] rounded-full bg-[#2b579a]" />
            <span className="ml-[3px]">燃料油2603</span>
            <sup className="top-[-3px] text-[9px] text-[#f00000]">M</sup>
            <span className="ml-[2px] whitespace-pre">(SHFE  fu2603)</span>
            <button className="ml-[12px] flex items-center gap-[2px]">1分钟<Chevron /></button>
          </div>
          <div className="flex flex-1">
            <SideTabs />
            <Charts />
          </div>
        </div>
        <RightPanel />
      </main>
      <BottomBars />
      <Taskbar />
    </div>
  );
}
